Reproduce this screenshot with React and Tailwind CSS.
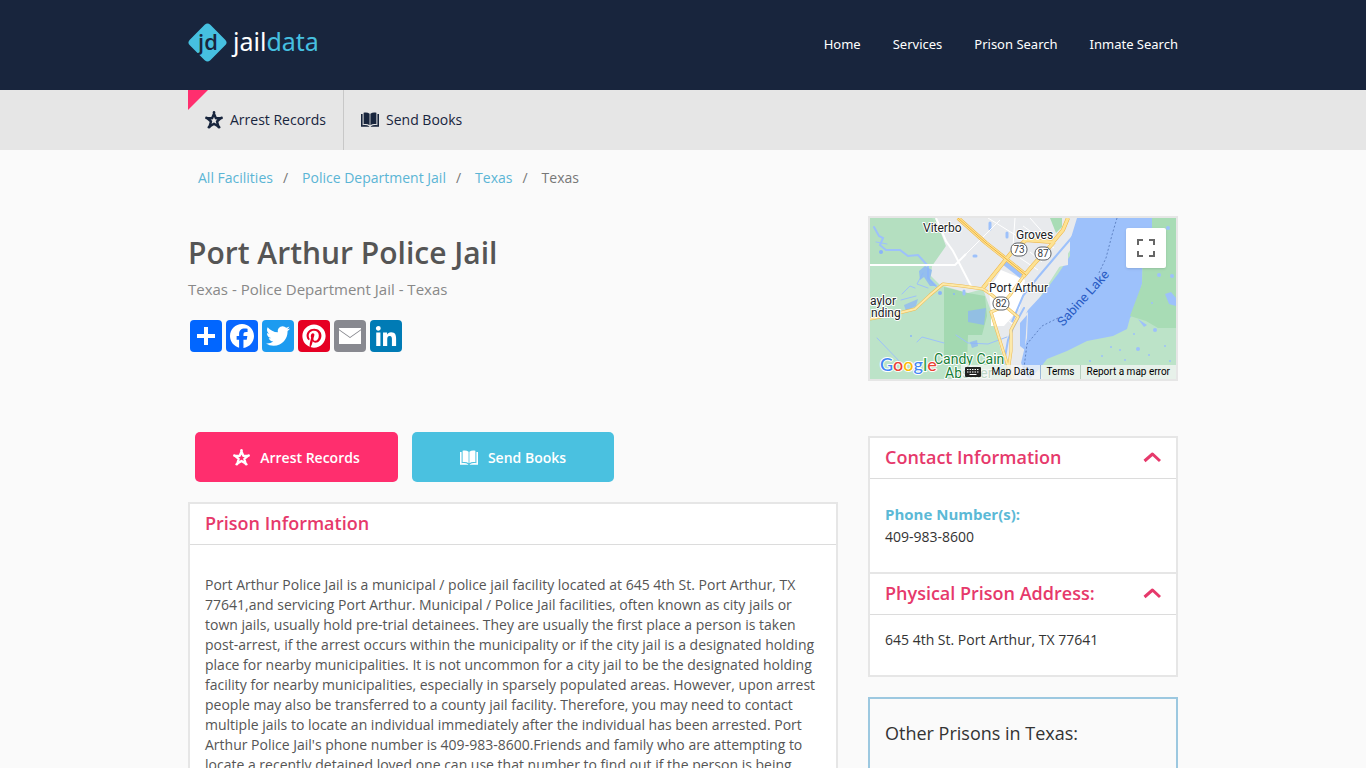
import { useState } from 'react';
import { FaPinterest } from 'react-icons/fa';

const NAV_LINKS = ['Home', 'Services', 'Prison Search', 'Inmate Search'];

const CRUMBS = ['All Facilities', 'Police Department Jail', 'Texas'];

const StarIcon = ({ className }) => (
  <svg viewBox="0 0 18 18" className={className} aria-hidden="true">
    <path
      d="M9 2.600 10.900 7.200H15.800L12 10.500 13.400 15.400 9 12.700 4.600 15.400 6 10.500 2.200 7.200H7.100z"
      fill="none" stroke="currentColor" strokeWidth="2.400" strokeLinejoin="round"
    />
    <g fill="currentColor">
      <circle cx="9" cy="1.400" r="1.300" />
      <circle cx="16.600" cy="6.900" r="1.300" />
      <circle cx="1.400" cy="6.900" r="1.300" />
      <circle cx="4" cy="16.200" r="1.400" />
      <circle cx="14" cy="16.200" r="1.400" />
    </g>
  </svg>
);

const BookIcon = ({ className }) => (
  <svg viewBox="0 0 18 16" className={className} aria-hidden="true" fill="currentColor">
    <path d="M2.600 .7C5 .1 7 .4 8.600 1.700v11.600C7 12.100 5 11.800 2.600 12.300z" />
    <path d="M15.400 .7C13 .1 11 .4 9.400 1.700v11.600c1.600-1.200 3.600-1.500 6-1z" />
    <path d="M0 2.100h1.600v11.200c2.400-.5 4.600-.3 6.600.9v.5H0zM18 2.100h-1.600v11.200c-2.400-.5-4.600-.3-6.600.9v.5H18z" />
  </svg>
);

const Logo = () => (
  <a href="#" aria-label="jaildata" className="block">
    <svg width="140" height="48" viewBox="0 0 140 48">
      <rect x="5" y="7" width="29" height="29" rx="4" fill="#46c0e0" transform="rotate(45 19.500 21.500)" />
      <text x="10" y="29" fill="#18253d" className="font-['Open_Sans'] text-[22px] font-semibold">jd</text>
      <text x="45" y="30" fill="#ffffff" className="font-['Noto_Sans'] text-[25px]">
        jail<tspan fill="#46c0e0">data</tspan>
      </text>
    </svg>
  </a>
);

const SHARES = [
  { label: 'Share', bg: 'bg-[#0166ff]', path: 'M14 7h4v18h-4z M7 14h18v4H7z' },
  {
    label: 'Facebook',
    bg: 'bg-[#0866ff]',
    path: 'M28 16c0-6.627-5.373-12-12-12S4 9.373 4 16c0 5.628 3.875 10.35 9.101 11.647v-7.98h-2.474V16H13.1v-1.58c0-4.085 1.849-5.978 5.859-5.978.76 0 2.072.15 2.608.298v3.325c-.283-.03-.775-.045-1.386-.045-1.967 0-2.728.745-2.728 2.683V16h3.92l-.673 3.667h-3.247v8.245C23.395 27.195 28 22.135 28 16',
  },
  {
    label: 'Twitter',
    bg: 'bg-[#1d9bf0]',
    path: 'M28 8.557a10 10 0 0 1-2.828.775 4.93 4.93 0 0 0 2.166-2.725 9.7 9.7 0 0 1-3.13 1.194 4.92 4.92 0 0 0-3.593-1.55 4.924 4.924 0 0 0-4.794 6.049c-4.09-.21-7.72-2.17-10.15-5.15a4.94 4.94 0 0 0-.665 2.477c0 1.71.87 3.214 2.19 4.1a5 5 0 0 1-2.23-.616v.06c0 2.39 1.7 4.38 3.952 4.83-.414.115-.85.174-1.297.174q-.476-.001-.928-.088a4.935 4.935 0 0 0 4.6 3.42 9.9 9.9 0 0 1-6.114 2.107q-.597 0-1.175-.068a13.95 13.95 0 0 0 7.55 2.213c9.056 0 14.01-7.507 14.01-14.013q0-.32-.015-.637c.96-.695 1.795-1.56 2.455-2.55z',
  },
  { label: 'Pinterest', bg: 'bg-[#e60023]', icon: FaPinterest },
  {
    label: 'Email',
    bg: 'bg-[#888990]',
    path: 'M5 8h22v1.200l-11 7.800L5 9.200z M5 10.200l11 7.800 11-7.800V24H5z',
  },
  {
    label: 'LinkedIn',
    bg: 'bg-[#007bb5]',
    path: 'M6.227 12.61h4.19v13.48h-4.19zm2.095-6.7a2.43 2.43 0 0 1 0 4.86c-1.344 0-2.428-1.09-2.428-2.43s1.084-2.43 2.428-2.43m4.72 6.7h4.02v1.84h.058c.56-1.058 1.927-2.176 3.965-2.176 4.238 0 5.02 2.792 5.02 6.42v7.395h-4.183v-6.56c0-1.564-.03-3.574-2.178-3.574-2.18 0-2.514 1.7-2.514 3.46v6.668h-4.187z',
  },
];

const Shield = ({ x, y, children }) => (
  <g>
    <rect x={x - 8} y={y - 6} width="16" height="13" rx="6" fill="#fff" stroke="#5f6368" />
    <text x={x} y={y + 4} textAnchor="middle" fill="#3c4043" className="text-[10px]">{children}</text>
  </g>
);

const MAIN_ROADS = [
  'M88 0 116 25 135 40 156 57',
  'M113 70 141 35 156 22 183 24 193 12 198 0',
  'M153 59 164 46 184 24',
];

const ROADS = [
  'M0 101 25 96 45 91 60 77 73 66 92 68 113 71 122 77 148 99 141 112 141 133 137 161',
  'M153 59 140 77 128 91 121 94 131 126 137 145 143 161',
];

const Map = () => (
  <div className="relative overflow-hidden border-2 border-[#e6e6e6] font-['Roboto']">
    <svg viewBox="0 0 306 161" className="block w-full" role="img" aria-label="Map of Port Arthur">
      <rect width="306" height="161" fill="#bce3c8" />
      <path d="M74 69 98 75 115 78 117 98 112 117 98 117 97 145 74 145z" fill="#a3d9b1" />
      <path d="M0 0h62L76 25 70 48H0z" fill="#b4dfc0" />
      <path d="M65 0 76 28 62 48 61 58 70 67 98 75 113 71 121 93 131 133 142 161h31L150 110 208 20V0z" fill="#e8eaed" />
      <path d="M121 93 119 72 131 52 155 62 150 90 134 108 121 108z" fill="#fff" />
      <path d="M136 40 154 54 150 60 132 46z" fill="#9dc1fb" />
      {/* bayous and ponds */}
      <g fill="none" stroke="#9dc1fb" strokeLinecap="round">
        <path d="M4 9 9 18 13 20 10 27 16 32 30 32 38 38 48 37 58 48 58 60 66 68" strokeWidth="2" />
        <path d="M6 24 17 26 M32 76 40 68 45 70 M53 55 47 66 58 70 M74 125 52 119 47 124 M86 117 98 125 118 126 137 119 M7 120 32 146 M31 82 46 78" />
        <path d="M154 90 143 110 138 122 134 145 127 154" strokeWidth="2" />
        <path d="M120 5v6 M137 15v4 M104 38h2 M94 73v3" strokeWidth="3" />
      </g>
      <g fill="#8ab4f8">
        <path d="M55 48 62 52 60 61 66 68 60 68 54 59 50 62 49 53z" opacity=".8" />
        <path d="M34 87 48 81 46 88 36 93z M98 93 116 90 114 107 98 104z M100 124 107 122 108 128 102 130z" opacity=".7" />
        <circle cx="11" cy="34" r="2" />
        <circle cx="41" cy="118" r="1" />
        <circle cx="70" cy="75" r="2" />
        <circle cx="84" cy="76" r="1" />
      </g>
      {/* Sabine Lake */}
      <path
        d="M207 0H282V26L273 39 272 66 265 93 260 100 257 111 243 118 217 123 197 133 177 141 170 150 160 161 153 156 148 128 150 107 158 92 172 77 188 56 200 38 200 23z"
        fill="#9dc1fb"
      />
      <path d="M153 98 158 94 157 120 151 145 156 161 148 161 146 112z" fill="#e8eaed" />
      <path d="M150 105 157 97 155 132 150 128z" fill="#9dc1fb" />
      <path d="M186 44 198 33 198 47 188 49z" fill="#e8eaed" />
      <path d="M204 17 186 38 169 58 153 78 142 104" fill="none" stroke="#9dc1fb" strokeWidth="2" />
      <path d="M282 0H306V110H288L276 103 260 98 272 66 273 39 282 26z" fill="#a8dcb5" />
      <g fill="#9dc1fb">
        <circle cx="298" cy="10" r="2" />
        <circle cx="302" cy="58" r="2" />
        <circle cx="289" cy="57" r="2" />
        <path d="M295 76 301 74 306 80V88L299 86z M268 101 277 107 274 109z" />
        <circle cx="282" cy="85" r="1" />
        <circle cx="285" cy="112" r="2" />
        <circle cx="264" cy="116" r="1" />
        <circle cx="268" cy="131" r="2" />
        <circle cx="250" cy="132" r="1" />
        <circle cx="232" cy="138" r="1" />
        <circle cx="241" cy="129" r="1" />
        <circle cx="295" cy="128" r="1" />
        <circle cx="300" cy="143" r="1" />
        <circle cx="279" cy="137" r="1" />
        <circle cx="220" cy="143" r="1" />
        <circle cx="255" cy="142" r="1" />
      </g>
      <path d="M180 0h12v9l-6 6z" fill="#a8dcb5" />
      <path d="M247 0 242 17 236 40 228 57 M188 100 172 108 157 126 154 150" fill="none" stroke="#5f83c4" strokeDasharray="2 2" />
      {/* streets */}
      <g fill="none" stroke="#fff">
        <path d="M0 47H85L96 36 M66 0 76 23 83 33 102 70" strokeWidth="2" />
        <path d="M96 36 130 2 M145 0 143 28 M118 0 147 18 M160 0 176 18 M153 8 184 30 M160 34 172 44 M150 40 168 52 M130 60 150 78 M126 68 146 88 M150 62 134 86 M158 66 132 100 M129 94 142 106" />
      </g>
      <g fill="none" strokeLinejoin="round">
        {ROADS.map((d) => <path key={d} d={d} stroke="#eebb50" strokeWidth="3" />)}
        {ROADS.map((d) => <path key={d} d={d} stroke="#fde9a9" strokeWidth="2" />)}
        {MAIN_ROADS.map((d) => <path key={d} d={d} stroke="#efb23d" strokeWidth="4" />)}
        {MAIN_ROADS.map((d) => <path key={d} d={d} stroke="#fde293" strokeWidth="3" />)}
        <path d={MAIN_ROADS[0]} stroke="#efb23d" />
      </g>
      <Shield x={149} y={31}>73</Shield>
      <Shield x={173} y={35}>87</Shield>
      <Shield x={131} y={85}>82</Shield>
      <g fill="#202124" stroke="#fff" strokeWidth="2" strokeLinejoin="round" className="text-[12px] [paint-order:stroke]">
        <text x="53" y="14">Viterbo</text>
        <text x="146" y="21">Groves</text>
        <text x="119" y="74">Port Arthur</text>
        <text x="0" y="87">aylor</text>
        <text x="1" y="99">nding</text>
        <text x="64" y="146" fill="#188038" className="text-[14px]">Candy Cain</text>
        <text x="75" y="160" fill="#188038" className="text-[14px]">Abshier</text>
      </g>
      <text x="193" y="109" fill="#2a5cc4" transform="rotate(-48 193 109)" className="text-[13px]">Sabine Lake</text>
      <text x="10" y="153" stroke="#fff" strokeWidth="2" className="font-['Lato'] text-[18px] font-medium [paint-order:stroke]">
        <tspan fill="#4285f4">G</tspan><tspan fill="#ea4335">o</tspan><tspan fill="#fbbc04">o</tspan><tspan fill="#4285f4">g</tspan><tspan fill="#34a853">l</tspan><tspan fill="#ea4335">e</tspan>
      </text>
    </svg>
    <button type="button" aria-label="Toggle fullscreen view" className="absolute top-[10px] right-[10px] flex size-10 items-center justify-center rounded-xs bg-white shadow">
      <svg viewBox="0 0 18 18" className="size-[18px]" fill="#666">
        <path d="M0 0v6h2V2h4V0zM16 0h-4v2h4v4h2V0zM16 16h-4v2h6v-6h-2zM2 12H0v6h6v-2H2z" />
      </svg>
    </button>
    <div className="absolute right-0 bottom-0 flex h-[14px] items-center bg-[#f5f5f5]/75 text-[10px] leading-[14px] text-black">
      <button type="button" aria-label="Keyboard shortcuts" className="px-1">
        <svg viewBox="0 0 16 10" className="h-[10px] w-4">
          <rect width="16" height="10" rx="1" fill="#222" />
          <path d="M2 2.500h12M2 5h12" stroke="#fff" strokeDasharray="1.500 1" />
          <path d="M4.500 7.500h7" stroke="#fff" />
        </svg>
      </button>
      <button type="button" className="px-[6px]">Map Data</button>
      <a href="#" className="border-l border-[#9bb8d8] px-[5px]">Terms</a>
      <a href="#" className="border-l border-[#b8cfc0] px-[6px]">Report a map error</a>
    </div>
  </div>
);

const Panel = ({ title, children, bodyClass }) => {
  const [open, setOpen] = useState(true);
  return (
    <section className="border-b-2 border-[#e6e6e6]">
      <h2 className="border-b border-[#dcdcdc]">
        <button
          type="button"
          aria-expanded={open}
          onClick={() => setOpen(!open)}
          className="flex h-10 w-full items-center justify-between px-[15px] pb-[2px] text-left text-[18px] font-semibold text-[#e6396b]"
        >
          {title}
          <svg viewBox="0 0 18 12" className={open ? 'h-3 w-[18px]' : 'h-3 w-[18px] rotate-180'} aria-hidden="true">
            <path d="M1.500 10 9.500 3 17 10" fill="none" stroke="currentColor" strokeWidth="3" strokeLinejoin="round" />
          </svg>
        </button>
      </h2>
      {open && <div className={bodyClass}>{children}</div>}
    </section>
  );
};

const App = () => (
  <div className="min-h-screen bg-[#fafafa] font-['Open_Sans',sans-serif] text-[14px] leading-5 text-[#333]">
    <header className="bg-[#18253d]">
      <div className="mx-auto flex h-[90px] max-w-[990px] items-center justify-between">
        <Logo />
        <nav className="flex gap-8 pb-[2px] font-['Noto_Sans',sans-serif] text-[13px] text-white">
          {NAV_LINKS.map((label) => <a key={label} href="#">{label}</a>)}
        </nav>
      </div>
    </header>

    <div className="bg-[#e6e6e6]">
      <nav className="relative mx-auto flex h-[60px] max-w-[990px] text-[#18253d]">
        <span className="absolute top-0 left-0 size-5 bg-[#ff2e6e] [clip-path:polygon(0_0,100%_0,0_100%)]" />
        <a href="#" className="flex items-center gap-[7px] border-r border-[#c8c8c8] px-[17px]">
          <StarIcon className="size-[18px]" />
          Arrest Records
        </a>
        <a href="#" className="flex items-center gap-[7px] px-[17px]">
          <BookIcon className="h-4 w-[18px]" />
          Send Books
        </a>
      </nav>
    </div>

    <main className="mx-auto max-w-[990px] pb-10">
      <nav aria-label="Breadcrumb" className="px-[10px] pt-[18px] pb-7">
        <ol className="flex text-[#777]">
          {CRUMBS.map((c) => (
            <li key={c}>
              <a href="#" className="text-[#5bb5d5]">{c}</a>
              <span className="mr-[14px] ml-[10px]">/</span>
            </li>
          ))}
          <li>Texas</li>
        </ol>
      </nav>

      <div className="grid grid-cols-1 gap-[30px] md:grid-cols-[minmax(0,1fr)_310px]">
        <div>
          <h1 className="pt-[17px] text-[30px] leading-10 font-semibold text-[#555]">Port Arthur Police Jail</h1>
          <p className="pt-[6px] text-[15px] text-[#888]">Texas - Police Department Jail - Texas</p>

          <div className="flex gap-1 px-[2px] pt-[21px]">
            {SHARES.map(({ label, bg, path, icon: Icon }) => (
              <a key={label} href="#" aria-label={label} className={`flex size-8 items-center justify-center rounded text-white ${bg}`}>
                {Icon ? <Icon size={24} /> : <svg viewBox="0 0 32 32" className="size-8" fill="currentColor"><path d={path} /></svg>}
              </a>
            ))}
          </div>

          <div className="flex gap-[14px] px-[7px] pt-20 pb-5 font-semibold text-white">
            <a href="#" className="flex h-[50px] w-[203px] items-center justify-center gap-[10px] rounded-[5px] bg-[#ff2e6e] pt-px">
              <StarIcon className="size-[17px]" />
              Arrest Records
            </a>
            <a href="#" className="flex h-[50px] w-[202px] items-center justify-center gap-[10px] rounded-[5px] bg-[#4ac1e0] pt-px">
              <BookIcon className="h-4 w-[18px]" />
              Send Books
            </a>
          </div>

          <section className="border-2 border-[#e6e6e6] bg-white">
            <h2 className="h-[41px] border-b border-[#dcdcdc] px-[15px] text-[18px] leading-[38px] font-semibold text-[#e6396b]">Prison Information</h2>
            <p className="px-[15px] pt-[30px] pb-[30px] text-[#555]">
              Port Arthur Police Jail is a municipal / police jail facility located at 645 4th St. Port Arthur, TX
              77641,and servicing Port Arthur. Municipal / Police Jail facilities, often known as city jails or town
              jails, usually hold pre-trial detainees. They are usually the first place a person is taken post-arrest,
              if the arrest occurs within the municipality or if the city jail is a designated holding place for nearby
              municipalities. It is not uncommon for a city jail to be the designated holding facility for nearby
              municipalities, especially in sparsely populated areas. However, upon arrest people may also be
              transferred to a county jail facility. Therefore, you may need to contact multiple jails to locate an
              individual immediately after the individual has been arrested. Port Arthur Police Jail's phone number is
              409-983-8600.Friends and family who are attempting to locate a recently detained loved one can use that
              number to find out if the person is being
            </p>
          </section>
        </div>

        <aside>
          <Map />

          <div className="mt-[55px] border-2 border-b-0 border-[#e6e6e6] bg-white">
            <Panel title="Contact Information" bodyClass="px-[15px] pt-[25px] pb-[25px]">
              <h3 className="text-[15px] font-bold text-[#5bb9d6]">Phone Number(s):</h3>
              <p className="pt-[3px]">409-983-8600</p>
            </Panel>
            <Panel title="Physical Prison Address:" bodyClass="px-[15px] pt-[15px] pb-[25px]">
              <p>645 4th St. Port Arthur, TX 77641</p>
            </Panel>
          </div>

          <section className="mt-5 border-2 border-[#9cc8e0] px-[15px] pt-6 pb-10">
            <h2 className="text-[18px]">Other Prisons in Texas:</h2>
          </section>
        </aside>
      </div>
    </main>
  </div>
);

export default App;
